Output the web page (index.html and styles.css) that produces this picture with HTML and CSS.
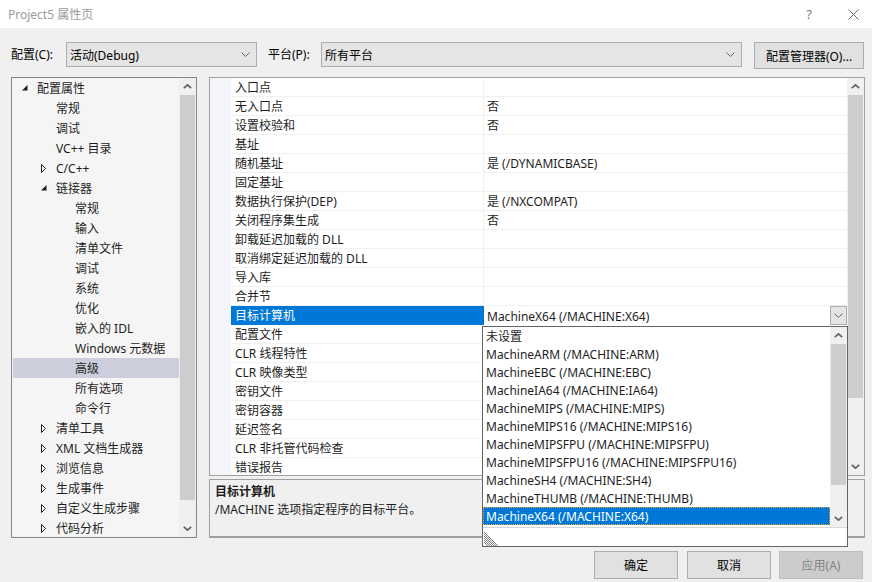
FILE: index.html
```html
<!DOCTYPE html>
<html lang="zh-CN">
<head>
<meta charset="utf-8">
<title>Project5 属性页</title>
<link rel="stylesheet" href="styles.css">
</head>
<body>
<div class="titlebar">
  <span class="title">Project5 属性页</span>
  <span class="tb-help">?</span>
  <span class="tb-close"><svg width="11" height="11" viewBox="0 0 11 11"><path d="M0.5 0.5 L10.5 10.5 M10.5 0.5 L0.5 10.5" stroke="#6a6a6a" stroke-width="1" fill="none"/></svg></span>
</div>

<div class="config-row">
  <span class="lbl lbl-config">配置(C):</span>
  <div class="combo combo-config"><span class="combo-text">活动(Debug)</span><svg class="chev" width="9" height="5" viewBox="0 0 9 5"><path d="M0.5 0.5 L4.5 4.5 L8.5 0.5" fill="none" stroke="#6a6a6a"/></svg></div>
  <span class="lbl lbl-platform">平台(P):</span>
  <div class="combo combo-platform"><span class="combo-text">所有平台</span><svg class="chev" width="9" height="5" viewBox="0 0 9 5"><path d="M0.5 0.5 L4.5 4.5 L8.5 0.5" fill="none" stroke="#6a6a6a"/></svg></div>
  <div class="btn btn-mgr">配置管理器(O)...</div>
</div>

<div class="main">
  <div class="tree">
    <div class="tree-list">
      <div class="trow l0"><span class="arr"><svg width="6" height="6" viewBox="0 0 6 6"><path d="M5.5 0 L5.5 5.5 L0 5.5 Z" fill="#1e1e1e"/></svg></span>配置属性</div>
      <div class="trow l1"><span class="arr"></span>常规</div>
      <div class="trow l1"><span class="arr"></span>调试</div>
      <div class="trow l1"><span class="arr"></span>VC++ 目录</div>
      <div class="trow l1"><span class="arr"><svg width="6" height="9" viewBox="0 0 6 9"><path d="M0.5 0.5 L4.5 4.5 L0.5 8.5 Z" fill="#fff" stroke="#1e1e1e"/></svg></span>C/C++</div>
      <div class="trow l1"><span class="arr"><svg width="6" height="6" viewBox="0 0 6 6"><path d="M5.5 0 L5.5 5.5 L0 5.5 Z" fill="#1e1e1e"/></svg></span>链接器</div>
      <div class="trow l2"><span class="arr"></span>常规</div>
      <div class="trow l2"><span class="arr"></span>输入</div>
      <div class="trow l2"><span class="arr"></span>清单文件</div>
      <div class="trow l2"><span class="arr"></span>调试</div>
      <div class="trow l2"><span class="arr"></span>系统</div>
      <div class="trow l2"><span class="arr"></span>优化</div>
      <div class="trow l2"><span class="arr"></span>嵌入的 IDL</div>
      <div class="trow l2"><span class="arr"></span>Windows 元数据</div>
      <div class="trow l2 sel"><span class="arr"></span>高级</div>
      <div class="trow l2"><span class="arr"></span>所有选项</div>
      <div class="trow l2"><span class="arr"></span>命令行</div>
      <div class="trow l1"><span class="arr"><svg width="6" height="9" viewBox="0 0 6 9"><path d="M0.5 0.5 L4.5 4.5 L0.5 8.5 Z" fill="#fff" stroke="#1e1e1e"/></svg></span>清单工具</div>
      <div class="trow l1"><span class="arr"><svg width="6" height="9" viewBox="0 0 6 9"><path d="M0.5 0.5 L4.5 4.5 L0.5 8.5 Z" fill="#fff" stroke="#1e1e1e"/></svg></span>XML 文档生成器</div>
      <div class="trow l1"><span class="arr"><svg width="6" height="9" viewBox="0 0 6 9"><path d="M0.5 0.5 L4.5 4.5 L0.5 8.5 Z" fill="#fff" stroke="#1e1e1e"/></svg></span>浏览信息</div>
      <div class="trow l1"><span class="arr"><svg width="6" height="9" viewBox="0 0 6 9"><path d="M0.5 0.5 L4.5 4.5 L0.5 8.5 Z" fill="#fff" stroke="#1e1e1e"/></svg></span>生成事件</div>
      <div class="trow l1"><span class="arr"><svg width="6" height="9" viewBox="0 0 6 9"><path d="M0.5 0.5 L4.5 4.5 L0.5 8.5 Z" fill="#fff" stroke="#1e1e1e"/></svg></span>自定义生成步骤</div>
      <div class="trow l1"><span class="arr"><svg width="6" height="9" viewBox="0 0 6 9"><path d="M0.5 0.5 L4.5 4.5 L0.5 8.5 Z" fill="#fff" stroke="#1e1e1e"/></svg></span>代码分析</div>
    </div>
    <div class="vscroll tree-scroll">
      <div class="sarrow"><svg width="9" height="5" viewBox="0 0 9 5"><path d="M0.8 4.2 L4.5 0.8 L8.2 4.2" fill="none" stroke="#606060" stroke-width="1.6"/></svg></div>
      <div class="sthumb tree-thumb"></div>
      <div class="sfill"></div>
      <div class="sarrow"><svg width="9" height="5" viewBox="0 0 9 5"><path d="M0.8 0.8 L4.5 4.2 L8.2 0.8" fill="none" stroke="#606060" stroke-width="1.6"/></svg></div>
    </div>
  </div>

  <div class="right">
    <div class="grid">
      <div class="grid-rows">
        <div class="grow"><span class="gut"></span><span class="gname">入口点</span><span class="gval"></span></div>
        <div class="grow"><span class="gut"></span><span class="gname">无入口点</span><span class="gval">否</span></div>
        <div class="grow"><span class="gut"></span><span class="gname">设置校验和</span><span class="gval">否</span></div>
        <div class="grow"><span class="gut"></span><span class="gname">基址</span><span class="gval"></span></div>
        <div class="grow"><span class="gut"></span><span class="gname">随机基址</span><span class="gval">是 (/DYNAMICBASE)</span></div>
        <div class="grow"><span class="gut"></span><span class="gname">固定基址</span><span class="gval"></span></div>
        <div class="grow"><span class="gut"></span><span class="gname">数据执行保护(DEP)</span><span class="gval">是 (/NXCOMPAT)</span></div>
        <div class="grow"><span class="gut"></span><span class="gname">关闭程序集生成</span><span class="gval">否</span></div>
        <div class="grow"><span class="gut"></span><span class="gname">卸载延迟加载的 DLL</span><span class="gval"></span></div>
        <div class="grow"><span class="gut"></span><span class="gname">取消绑定延迟加载的 DLL</span><span class="gval"></span></div>
        <div class="grow"><span class="gut"></span><span class="gname">导入库</span><span class="gval"></span></div>
        <div class="grow"><span class="gut"></span><span class="gname">合并节</span><span class="gval"></span></div>
        <div class="grow gsel"><span class="gut"></span><span class="gname">目标计算机</span><span class="gval gval-edit"><span class="gval-text">MachineX64 (/MACHINE:X64)</span><span class="dropbtn"><svg width="9" height="5" viewBox="0 0 9 5"><path d="M0.5 0.5 L4.5 4.5 L8.5 0.5" fill="none" stroke="#6a6a6a"/></svg></span></span></div>
        <div class="grow"><span class="gut"></span><span class="gname">配置文件</span><span class="gval"></span></div>
        <div class="grow"><span class="gut"></span><span class="gname">CLR 线程特性</span><span class="gval"></span></div>
        <div class="grow"><span class="gut"></span><span class="gname">CLR 映像类型</span><span class="gval"></span></div>
        <div class="grow"><span class="gut"></span><span class="gname">密钥文件</span><span class="gval"></span></div>
        <div class="grow"><span class="gut"></span><span class="gname">密钥容器</span><span class="gval"></span></div>
        <div class="grow"><span class="gut"></span><span class="gname">延迟签名</span><span class="gval"></span></div>
        <div class="grow"><span class="gut"></span><span class="gname">CLR 非托管代码检查</span><span class="gval"></span></div>
        <div class="grow"><span class="gut"></span><span class="gname">错误报告</span><span class="gval"></span></div>
      </div>
      <div class="vscroll grid-scroll">
        <div class="sarrow"><svg width="9" height="5" viewBox="0 0 9 5"><path d="M0.8 4.2 L4.5 0.8 L8.2 4.2" fill="none" stroke="#606060" stroke-width="1.6"/></svg></div>
        <div class="sthumb grid-thumb"></div>
        <div class="sfill"></div>
        <div class="sarrow"><svg width="9" height="5" viewBox="0 0 9 5"><path d="M0.8 0.8 L4.5 4.2 L8.2 0.8" fill="none" stroke="#606060" stroke-width="1.6"/></svg></div>
      </div>
    </div>
    <div class="desc">
      <div class="desc-title">目标计算机</div>
      <div class="desc-text">/MACHINE 选项指定程序的目标平台。</div>
    </div>
  </div>
</div>

<div class="footer">
  <div class="btn btn-foot">确定</div>
  <div class="btn btn-foot">取消</div>
  <div class="btn btn-foot btn-disabled">应用(A)</div>
</div>

<div class="dropdown">
  <div class="dd-body">
    <div class="dd-list">
      <div class="dd-item">未设置</div>
      <div class="dd-item">MachineARM (/MACHINE:ARM)</div>
      <div class="dd-item">MachineEBC (/MACHINE:EBC)</div>
      <div class="dd-item">MachineIA64 (/MACHINE:IA64)</div>
      <div class="dd-item">MachineMIPS (/MACHINE:MIPS)</div>
      <div class="dd-item">MachineMIPS16 (/MACHINE:MIPS16)</div>
      <div class="dd-item">MachineMIPSFPU (/MACHINE:MIPSFPU)</div>
      <div class="dd-item">MachineMIPSFPU16 (/MACHINE:MIPSFPU16)</div>
      <div class="dd-item">MachineSH4 (/MACHINE:SH4)</div>
      <div class="dd-item">MachineTHUMB (/MACHINE:THUMB)</div>
      <div class="dd-item dd-sel">MachineX64 (/MACHINE:X64)</div>
    </div>
    <div class="vscroll dd-scroll">
      <div class="sarrow"><svg width="9" height="5" viewBox="0 0 9 5"><path d="M0.8 4.2 L4.5 0.8 L8.2 4.2" fill="none" stroke="#606060" stroke-width="1.6"/></svg></div>
      <div class="sthumb dd-thumb"></div>
      <div class="sfill"></div>
      <div class="sarrow"><svg width="9" height="5" viewBox="0 0 9 5"><path d="M0.8 0.8 L4.5 4.2 L8.2 0.8" fill="none" stroke="#606060" stroke-width="1.6"/></svg></div>
    </div>
  </div>
  <div class="dd-grip">
    <svg width="16" height="16" viewBox="0 0 16 16"><path d="M0 2 L14 16 M0 4 L12 16 M0 6 L10 16 M0 8 L8 16 M0 10 L6 16 M0 12 L4 16" stroke="#808080" stroke-width="1" fill="none"/></svg>
  </div>
</div>
</body>
</html>
```

FILE: styles.css
```css
* { box-sizing: border-box; }
html, body { margin: 0; padding: 0; }
body {
  width: 872px;
  height: 582px;
  overflow: hidden;
  position: relative;
  background: #f0f0f0;
  font-family: "Noto Sans", "Noto Sans CJK SC", sans-serif;
  font-size: 12px;
  color: #000;
}

/* title bar */
.titlebar {
  height: 28px;
  background: #fff;
  display: flex;
  align-items: center;
}
.title { flex: 1; padding-left: 8px; color: #9a9a9a; }
.tb-help { width: 50px; text-align: center; color: #777; font-size: 13px; }
.tb-close { width: 38px; display: flex; justify-content: center; }

/* config row */
.config-row {
  margin-top: 14px;
  height: 26px;
  display: flex;
  align-items: flex-start;
  padding-left: 11px;
}
.lbl { line-height: 25px; }
.lbl-config { width: 55px; }
.lbl-platform { width: 53px; margin-left: 11px; }
.combo {
  height: 25px;
  border: 1px solid #adadad;
  background: #e5e5e5;
  display: flex;
  align-items: center;
  padding-left: 3px;
  padding-right: 6px;
}
.combo-text { flex: 1; }
.combo-config { width: 191px; }
.combo-platform { width: 421px; }
.btn {
  border: 1px solid #adadad;
  background: #e1e1e1;
  display: flex;
  align-items: center;
  justify-content: center;
}
.btn-mgr { width: 110px; height: 27px; margin-left: 12px; }

/* main */
.main {
  margin-top: 9px;
  height: 461px;
  display: flex;
  gap: 12px;
  padding-left: 11px;
}
.tree {
  width: 186px;
  height: 461px;
  border: 1px solid #828790;
  background: #f5f5f5;
  display: flex;
  overflow: hidden;
}
.tree-list { flex: 1; padding-left: 1px; overflow: hidden; }
.trow {
  height: 20px;
  display: flex;
  align-items: center;
  white-space: nowrap;
  color: #1e1e1e;
}
.trow .arr {
  width: 19px;
  flex: none;
  padding-left: 4px;
  display: flex;
  align-items: center;
}
.trow.l0 { padding-left: 5px; }
.trow.l1 { padding-left: 24px; }
.trow.l2 { padding-left: 43px; }
.trow.sel { background: #cccedb; }

/* scrollbars */
.vscroll {
  width: 17px;
  flex: none;
  background: #f0f0f0;
  display: flex;
  flex-direction: column;
  align-items: center;
}
.sarrow {
  height: 17px;
  width: 100%;
  flex: none;
  display: flex;
  align-items: center;
  justify-content: center;
}
.sthumb { width: 15px; background: #cdcdcd; flex: none; }
.sfill { flex: 1; }
.tree-thumb { height: 405px; }
.grid-thumb { height: 303px; }
.dd-thumb { height: 141px; }

/* right side */
.right {
  width: 656px;
  display: flex;
  flex-direction: column;
  gap: 3px;
}
.grid {
  height: 399px;
  border: 1px solid #a0a0a0;
  background: #fff;
  display: flex;
  overflow: hidden;
}
.grid-rows { flex: 1; overflow: hidden; }
.grow {
  height: 19px;
  display: flex;
  white-space: nowrap;
  overflow: hidden;
}
.gut { width: 21px; flex: none; background: #f4f5fa; }
.gname {
  width: 253px;
  flex: none;
  padding-left: 4px;
  padding-top: 1px;
  line-height: 17px;
  border-bottom: 1px solid #f0f0f0;
  border-right: 1px solid #f0f0f0;
  color: #1e1e1e;
}
.gval {
  flex: 1;
  padding-left: 3px;
  padding-top: 1px;
  line-height: 17px;
  border-bottom: 1px solid #f0f0f0;
  color: #1e1e1e;
}
.gsel .gname { background: #0078d7; color: #fff; border-right-color: #0078d7; border-bottom-color: #0078d7; }
.gval-edit { display: flex; align-items: center; padding-top: 0; padding-right: 0; border-bottom: none; }
.gval-text { flex: 1; padding-top: 1px; }
.dropbtn {
  width: 17px;
  height: 19px;
  border: 1px solid #adadad;
  background: #e5e5e5;
  display: flex;
  align-items: center;
  justify-content: center;
}

.desc {
  height: 59px;
  border: 1px solid #a0a0a0;
  border-bottom: 2px solid #a0a0a0;
  background: #f0f0f0;
  padding: 3px 5px 2px;
  line-height: 18px;
}
.desc-title { font-weight: bold; color: #1e1e1e; }
.desc-text { color: #1e1e1e; }

/* footer */
.footer {
  margin-top: 13px;
  display: flex;
  padding-left: 594px;
}
.btn-foot { width: 86px; height: 28px; margin-right: 9px; }
.btn-foot:nth-child(2) { margin-right: 8px; }
.btn-disabled { background: #cccccc; border-color: #bfbfbf; color: #838383; }

/* dropdown overlay */
.dropdown {
  position: absolute;
  left: 482px;
  top: 326px;
  width: 366px;
  height: 221px;
  border: 1px solid #646464;
  background: #fff;
  display: flex;
  flex-direction: column;
}
.dd-body { height: 200px; display: flex; }
.dd-list { flex: 1; }
.dd-item {
  height: 18px;
  line-height: 18px;
  padding-top: 1px;
  padding-left: 3px;
  white-space: nowrap;
  color: #1e1e1e;
  overflow: hidden;
}
.dd-item:not(.dd-sel) { line-height: 17px; }
.dd-sel {
  line-height: 17px;
  background: #0078d7;
  color: #fff;
  outline: 1px dotted #f0a040;
  outline-offset: -1px;
}
.dd-scroll { height: 200px; }
.dd-grip {
  flex: 1;
  border-top: 1px solid #d8d8d8;
  display: flex;
  align-items: flex-end;
  padding-left: 1px;
}
.dd-grip svg { display: block; }
```
